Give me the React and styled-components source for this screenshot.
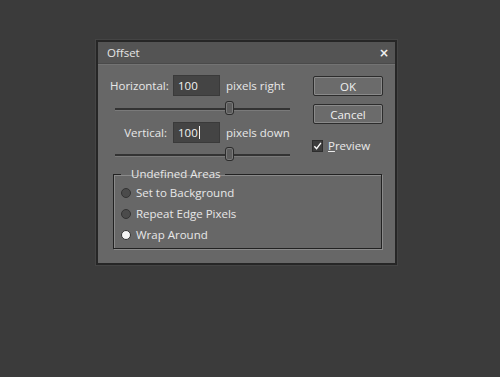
import React from "react";
import styled, { createGlobalStyle } from "styled-components";

const Global = createGlobalStyle`
  html, body { margin: 0; padding: 0; background: #3b3b3b; }
  body { width: 500px; height: 377px; overflow: hidden; font-family: "Open Sans", "Noto Sans", sans-serif; }
`;

const Page = styled.div`
  padding: 40px 0 0 96px;
`;

const Dialog = styled.div`
  width: 297px;
  border: 2px solid #262626;
  background: #676767;
  box-shadow: 0 0 0 1px #444;
`;

const TitleBar = styled.div`
  height: 21px;
  background: #545454;
  border-bottom: 1px solid #4a4a4a;
  display: flex;
  align-items: center;
  justify-content: space-between;
  padding: 0 6px 0 9px;
  color: #e4e4e4;
  font-size: 11.5px;
`;

const Close = styled.span`
  font-family: "DejaVu Sans", sans-serif;
  font-weight: bold;
  font-size: 12px;
  color: #f0f0f0;
`;

const Body = styled.div`
  padding: 10px 12px 14px 15px;
  border-top: 1px solid #737373;
`;

const Top = styled.div`
  display: flex;
  justify-content: space-between;
`;

const LeftCol = styled.div`
  display: flex;
  flex-direction: column;
  width: 185px;
`;

const FieldRow = styled.div`
  display: flex;
  align-items: center;
  height: 21px;
  color: #e8e8e8;
  font-size: 11.5px;
`;

const Label = styled.span`
  width: 57px;
  text-align: right;
  margin-right: 6px;
  margin-left: -3px;
`;

const Input = styled.div`
  width: 47px;
  height: 21px;
  box-sizing: border-box;
  background: #444;
  border: 1px solid #3a3a3a;
  padding: 0 4px;
  display: flex;
  align-items: center;
  margin-right: 6px;
  color: #f2f2f2;
`;

const Caret = styled.span`
  display: inline-block;
  width: 1px;
  height: 13px;
  background: #f2f2f2;
  margin-left: 1px;
`;

const SliderBox = styled.div`
  height: ${(p) => p.$h}px;
  display: flex;
  align-items: center;
  padding-left: 2px;
`;

const Track = styled.div`
  width: 175px;
  height: 2px;
  background: #333;
  border-bottom: 1px solid #7a7a7a;
  position: relative;
`;

const Thumb = styled.div`
  position: absolute;
  left: 110px;
  top: -7px;
  width: 9px;
  height: 14px;
  box-sizing: border-box;
  border: 1px solid #2c2c2c;
  border-radius: 3px;
  background: #5d5d5d;
  box-shadow: inset 0 0 0 1px #7a7a7a;
`;

const RightCol = styled.div`
  display: flex;
  flex-direction: column;
  width: 70px;
  padding-top: 1px;
`;

const Button = styled.div`
  height: 20px;
  box-sizing: border-box;
  border: 1px solid #2c2c2c;
  border-radius: 2px;
  box-shadow: inset 0 0 0 1px #8a8a8a;
  background: #6b6b6b;
  color: #f0f0f0;
  font-size: 11.5px;
  display: flex;
  align-items: center;
  justify-content: center;
  margin-bottom: ${(p) => p.$mb}px;
`;

const CheckRow = styled.div`
  display: flex;
  align-items: center;
  color: #eaeaea;
  font-size: 11.5px;
  margin-left: -1px;
`;

const Box = styled.div`
  width: 11px;
  height: 12px;
  background: #3d3d3d;
  border: 1px solid #2e2e2e;
  box-sizing: border-box;
  margin-right: 5px;
  display: flex;
  align-items: center;
  justify-content: center;
`;

const Group = styled.fieldset`
  margin: -1px 1px 0 0;
  padding: 1px 0 3px 7px;
  border: 1px solid #222;
  box-shadow: 1px 1px 0 #8a8a8a, inset 1px 1px 0 #8a8a8a;
  min-width: 0;
`;

const Legend = styled.legend`
  margin-left: 0;
  padding: 0 4px 0 10px;
  color: #e8e8e8;
  font-size: 11.5px;
  line-height: 14px;
`;

const RadioRow = styled.div`
  display: flex;
  align-items: center;
  height: 21px;
  color: #e8e8e8;
  font-size: 11.5px;
`;

const Radio = styled.span`
  width: 10px;
  height: 10px;
  box-sizing: border-box;
  border-radius: 50%;
  border: 1px solid #333;
  background: ${(p) => (p.$on ? "#f4f4f4" : "#4b4b4b")};
  margin-right: 5px;
`;

const Slider = ({ h }) => (
  <SliderBox $h={h}>
    <Track>
      <Thumb />
    </Track>
  </SliderBox>
);

export default function App() {
  return (
    <Page>
      <Global />
      <Dialog>
        <TitleBar>
          <span>Offset</span>
          <Close>×</Close>
        </TitleBar>
        <Body>
          <Top>
            <LeftCol>
              <FieldRow>
                <Label>Horizontal:</Label>
                <Input>100</Input>
                <span>pixels right</span>
              </FieldRow>
              <Slider h={26} />
              <FieldRow>
                <Label>Vertical:</Label>
                <Input>
                  100<Caret />
                </Input>
                <span>pixels down</span>
              </FieldRow>
              <Slider h={25} />
            </LeftCol>
            <RightCol>
              <Button $mb={8}>OK</Button>
              <Button $mb={14}>Cancel</Button>
              <CheckRow>
                <Box>
                  <svg width="10" height="10" viewBox="0 0 10 10">
                    <path d="M1.5 5.2 L4 8 L8.8 1.5" fill="none" stroke="#fff" strokeWidth="1.5" />
                  </svg>
                </Box>
                <span>
                  <u>P</u>review
                </span>
              </CheckRow>
            </RightCol>
          </Top>
          <Group>
            <Legend>Undefined Areas</Legend>
            <RadioRow>
              <Radio />
              Set to Background
            </RadioRow>
            <RadioRow>
              <Radio />
              Repeat Edge Pixels
            </RadioRow>
            <RadioRow>
              <Radio $on />
              Wrap Around
            </RadioRow>
          </Group>
        </Body>
      </Dialog>
    </Page>
  );
}
